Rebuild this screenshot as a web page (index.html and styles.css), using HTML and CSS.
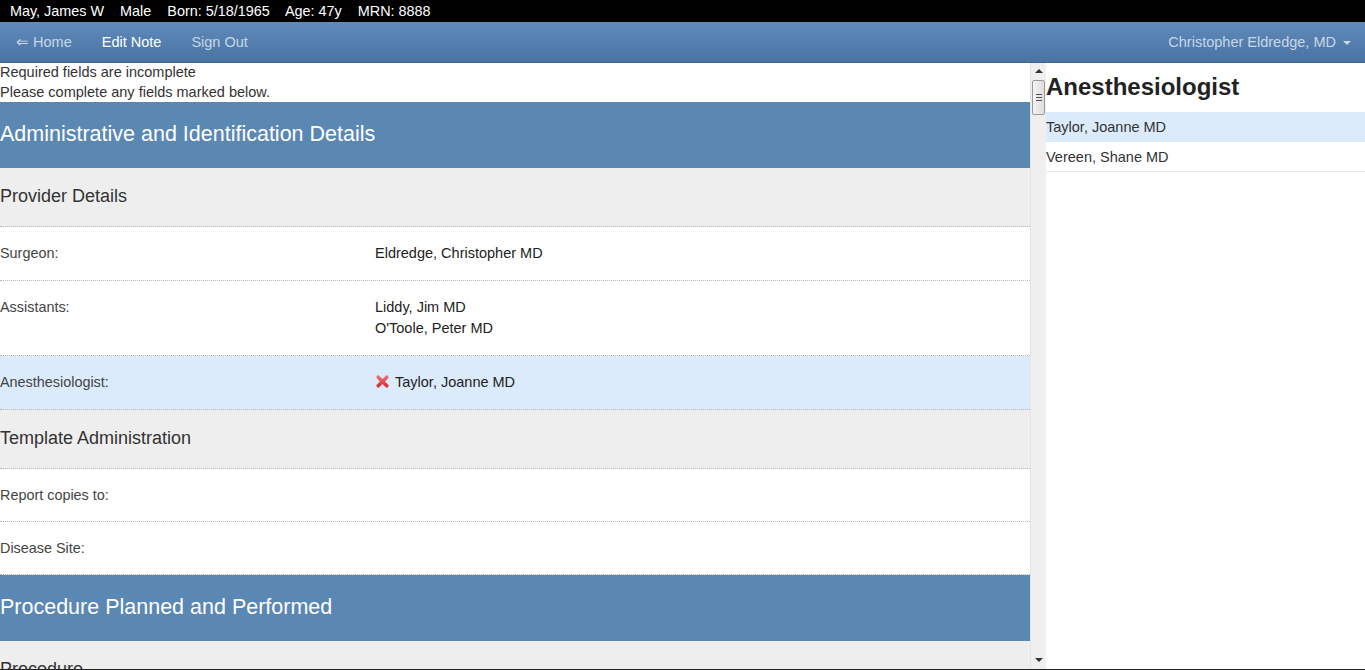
FILE: index.html
```html
<!DOCTYPE html>
<html lang="en">
<head>
    <meta charset="UTF-8">
    <title>Edit Note</title>
    <link rel="stylesheet" href="styles.css">
</head>
<body>
    <div class="patient-bar">
        <span>May, James W</span>
        <span>Male</span>
        <span>Born: 5/18/1965</span>
        <span>Age: 47y</span>
        <span>MRN: 8888</span>
    </div>

    <div class="navbar">
        <div class="nav-left">
            <a class="nav-link">&#8656; Home</a>
            <a class="nav-link active">Edit Note</a>
            <a class="nav-link">Sign Out</a>
        </div>
        <a class="nav-link user">Christopher Eldredge, MD <span class="caret"></span></a>
    </div>

    <div class="main">
        <div class="note">
            <div class="alert">
                <p>Required fields are incomplete</p>
                <p>Please complete any fields marked below.</p>
            </div>

            <h1 class="section">Administrative and Identification Details</h1>

            <h2 class="subsection">Provider Details</h2>
            <div class="field">
                <div class="label">Surgeon:</div>
                <div class="value">Eldredge, Christopher MD</div>
            </div>
            <div class="field">
                <div class="label">Assistants:</div>
                <div class="value">Liddy, Jim MD<br>O'Toole, Peter MD</div>
            </div>
            <div class="field selected">
                <div class="label">Anesthesiologist:</div>
                <div class="value">
                    <svg class="x-icon" width="15" height="15" viewBox="0 0 15 15">
                        <defs>
                            <linearGradient id="xg" x1="0" y1="0" x2="0" y2="1">
                                <stop offset="0" stop-color="#f26b70"/>
                                <stop offset="1" stop-color="#d8323b"/>
                            </linearGradient>
                        </defs>
                        <path d="M3.2 3.2 L11.8 11.8 M11.8 3.2 L3.2 11.8" stroke="url(#xg)" stroke-width="3.6" stroke-linecap="round"/>
                    </svg>Taylor, Joanne MD
                </div>
            </div>

            <h2 class="subsection">Template Administration</h2>
            <div class="field">
                <div class="label">Report copies to:</div>
                <div class="value"></div>
            </div>
            <div class="field">
                <div class="label">Disease Site:</div>
                <div class="value"></div>
            </div>

            <h1 class="section">Procedure Planned and Performed</h1>
            <h2 class="subsection">Procedure</h2>
        </div>

        <!-- fake classic scrollbar for the note pane -->
        <div class="scrollbar">
            <div class="arrow up"></div>
            <div class="thumb"><span></span><span></span><span></span></div>
            <div class="track"></div>
            <div class="arrow down"></div>
        </div>

        <div class="picker">
            <h2 class="picker-title">Anesthesiologist</h2>
            <ul class="picker-list">
                <li class="current">Taylor, Joanne MD</li>
                <li>Vereen, Shane MD</li>
            </ul>
        </div>
    </div>
</body>
</html>
```

FILE: styles.css
```css
* {
    margin: 0;
    padding: 0;
    box-sizing: border-box;
}

html, body {
    height: 670px;
    overflow: hidden;
}

body {
    font-family: 'Liberation Sans', Arial, sans-serif;
    font-size: 14.5px;
    color: #333;
    background: #fff;
    display: flex;
    flex-direction: column;
    border-bottom: 1px solid #222;
}

/* Patient banner */
.patient-bar {
    background: #000;
    color: #fff;
    height: 22px;
    line-height: 22px;
    padding-left: 10px;
    font-size: 14.4px;
}

.patient-bar span {
    margin-right: 12px;
}

/* Navbar */
.navbar {
    height: 41px;
    display: flex;
    justify-content: space-between;
    align-items: center;
    background: linear-gradient(to bottom, #5f8aba, #4873a2);
    border-bottom: 1px solid #3d6390;
}

.nav-left {
    display: flex;
    padding-left: 1px;
}

.nav-link {
    color: #c9d6e7;
    padding: 0 15px;
    line-height: 40px;
    text-decoration: none;
    cursor: pointer;
}

.nav-link.active {
    color: #fff;
}

.nav-link.user {
    padding-right: 14px;
}

.caret {
    display: inline-block;
    width: 0;
    height: 0;
    margin-left: 3px;
    vertical-align: middle;
    border-top: 4px solid #c9d6e7;
    border-left: 4px solid transparent;
    border-right: 4px solid transparent;
}

/* Main area */
.main {
    flex: 1;
    display: flex;
    min-height: 0;
}

.note {
    width: 1030px;
    overflow: hidden;
}

.alert p {
    line-height: 19px;
    height: 19px;
}

.alert p + p {
    line-height: 21px;
    height: 20px;
}

.section {
    background: #5b87b3;
    color: #fff;
    font-size: 21.5px;
    font-weight: normal;
    height: 66px;
    line-height: 65px;
}

.subsection {
    background: #eeeeee;
    font-size: 18px;
    font-weight: normal;
    height: 59px;
    line-height: 57px;
    border-bottom: 1px dotted #b8b8b8;
}

.field {
    display: grid;
    grid-template-columns: 375px 1fr;
    padding: 16px 0 16px;
    border-bottom: 1px dotted #b8b8b8;
    min-height: 53px;
}

.field.selected {
    background: #dbebfb;
}

.field .label {
    font-size: 14.4px;
    line-height: 20px;
    color: #444;
}

.field .value {
    line-height: 21px;
    color: #222;
}

.x-icon {
    vertical-align: -2px;
    margin: 0 5px 0 0;
}

/* Scrollbar */
.scrollbar {
    width: 16px;
    display: flex;
    flex-direction: column;
    background: #efefef;
    border-left: 1px solid #e4e4e4;
}

.arrow {
    height: 17px;
    position: relative;
}

.arrow::after {
    content: '';
    position: absolute;
    left: 4px;
    top: 6px;
    border-left: 4px solid transparent;
    border-right: 4px solid transparent;
}

.arrow.up::after {
    border-bottom: 4px solid #333;
}

.arrow.down::after {
    border-top: 4px solid #333;
}

.thumb {
    height: 35px;
    margin: 0 1px;
    border: 1px solid #9a9a9a;
    border-radius: 2px;
    background: linear-gradient(to right, #f4f4f4, #dcdcdc);
    display: flex;
    flex-direction: column;
    justify-content: center;
    align-items: center;
    gap: 2px;
}

.thumb span {
    width: 6px;
    height: 1px;
    background: #555;
}

.track {
    flex: 1;
}

/* Picker */
.picker {
    flex: 1;
}

.picker-title {
    font-size: 24px;
    font-weight: bold;
    color: #222;
    line-height: 28px;
    margin: 10px 0 11px;
}

.picker-list {
    list-style: none;
}

.picker-list li {
    height: 30px;
    line-height: 31px;
    border-bottom: 1px solid #e8e8e8;
    color: #333;
}

.picker-list li.current {
    background: #dbebfb;
    border-bottom-color: #dbebfb;
}
```
